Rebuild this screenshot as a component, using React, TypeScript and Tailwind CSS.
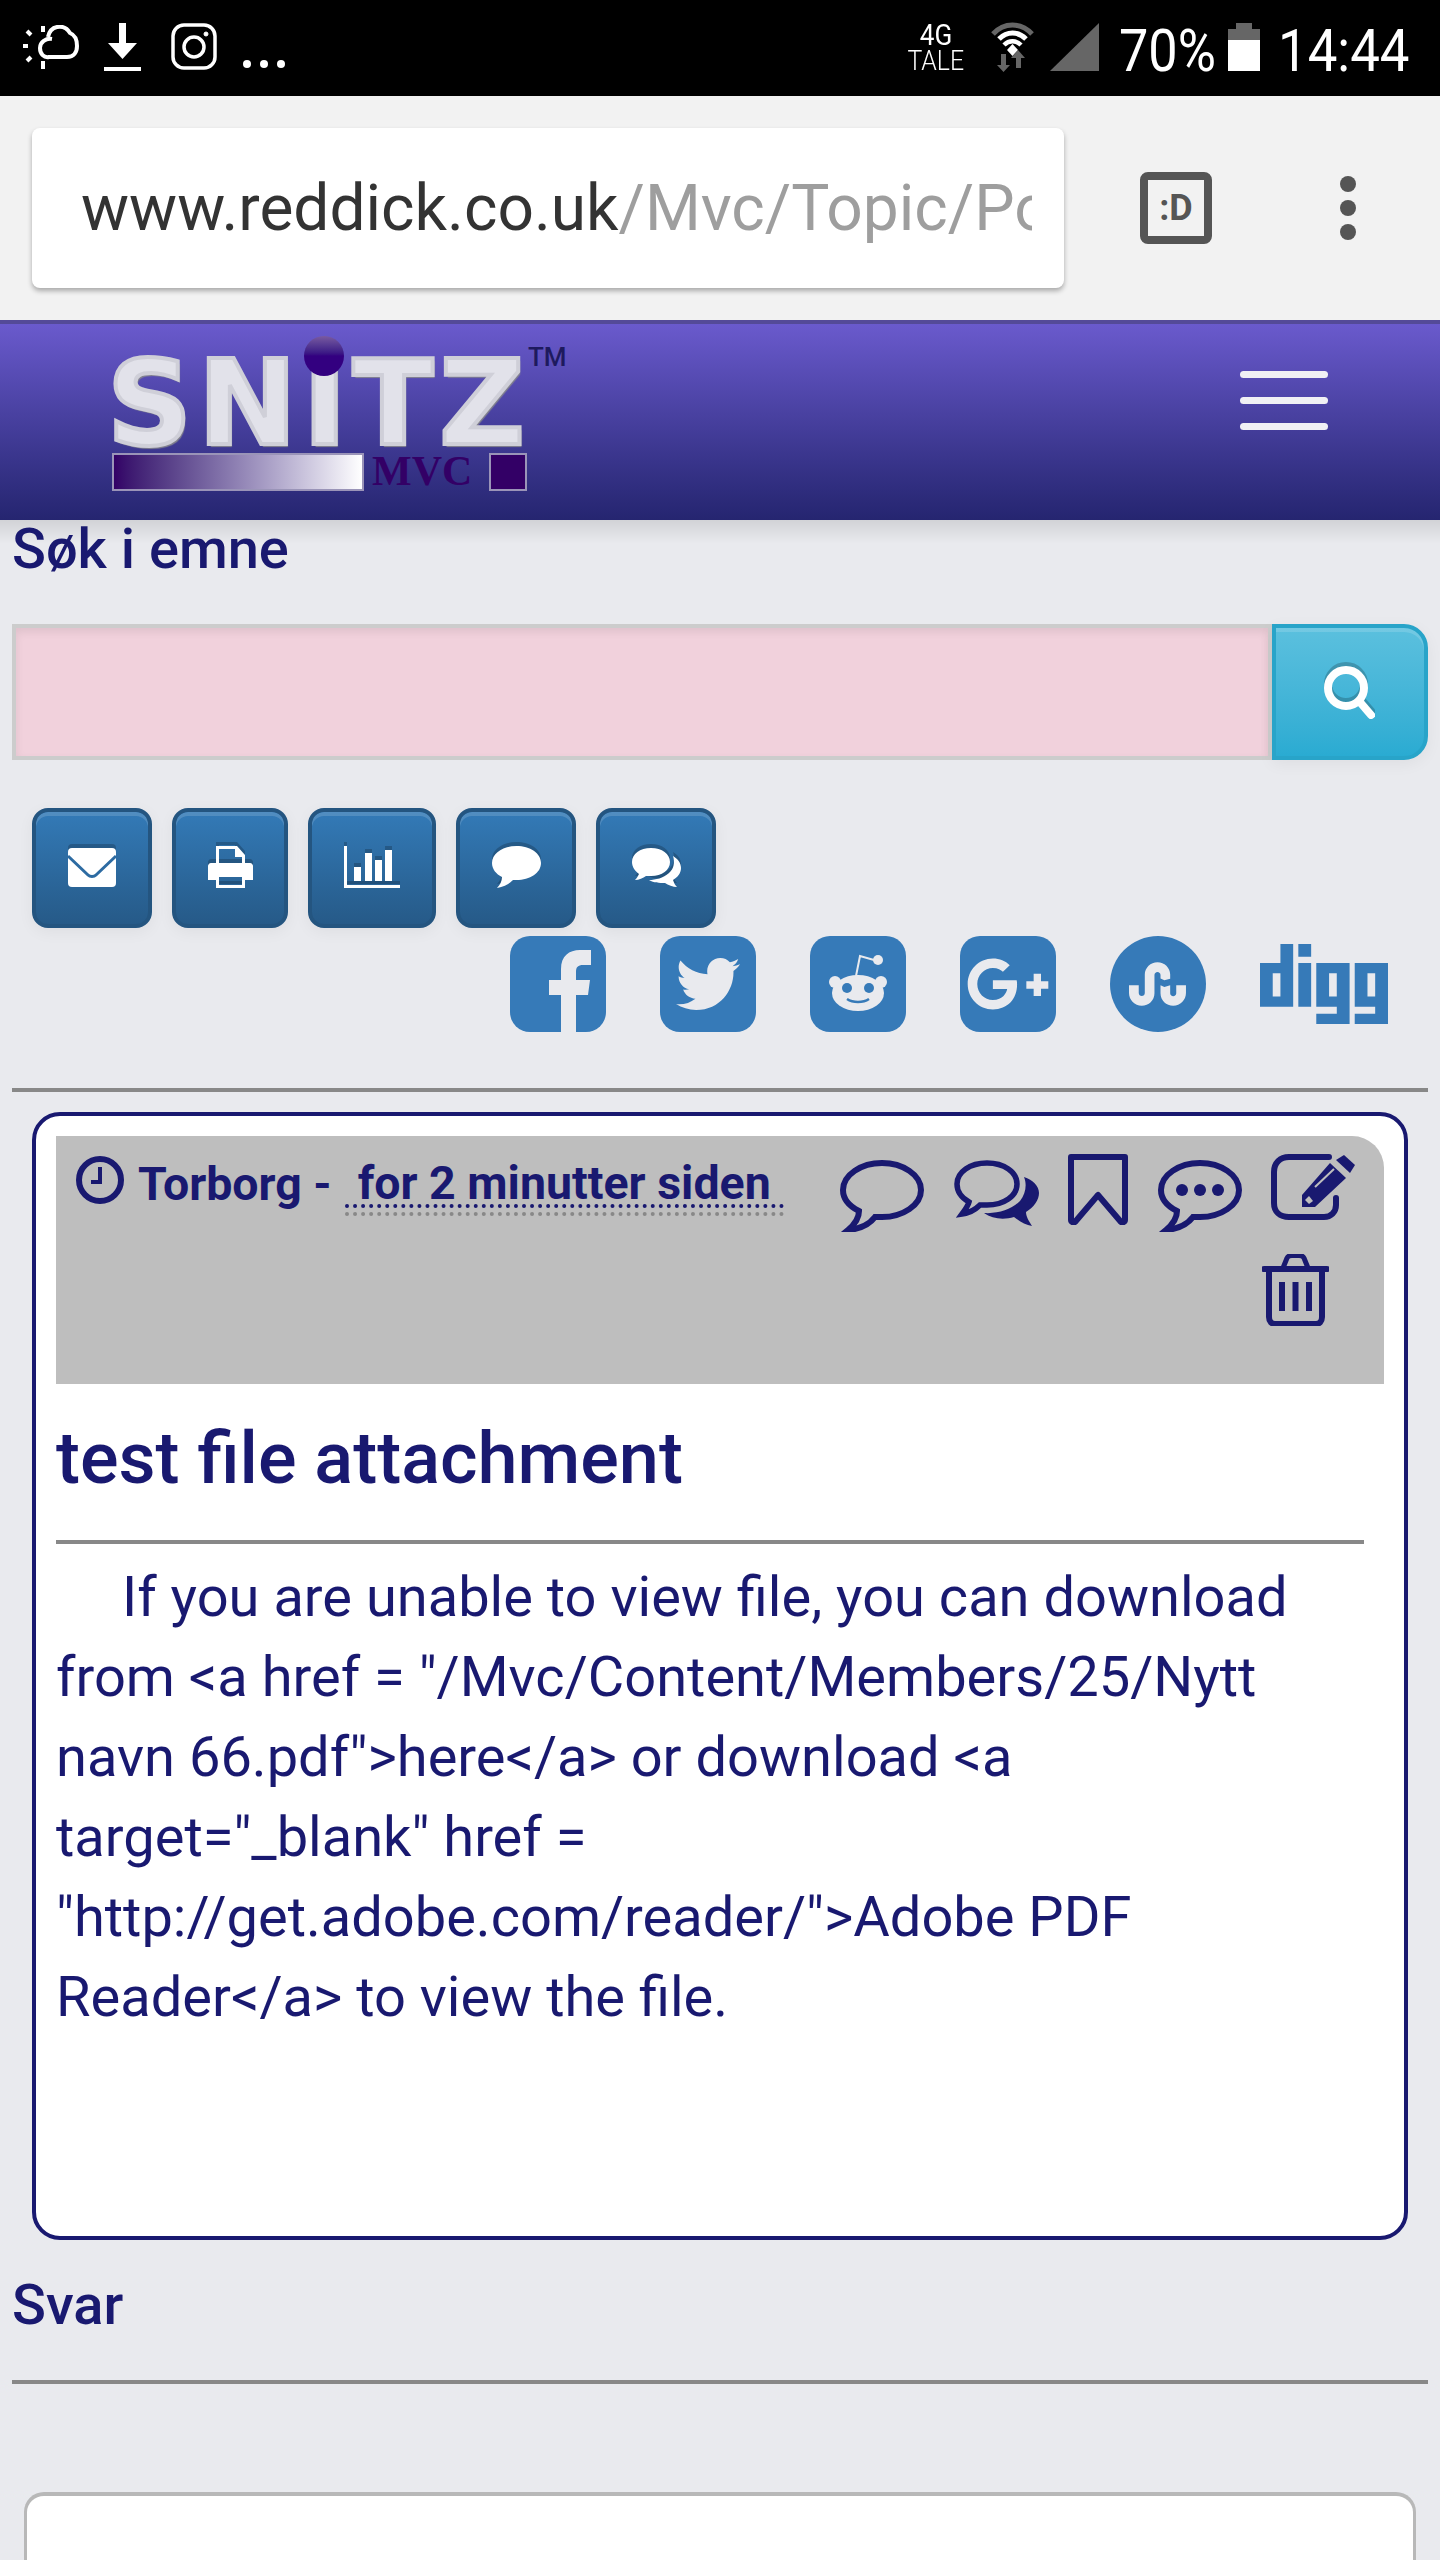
import { FaTwitter, FaGooglePlusG, FaStumbleupon, FaDigg } from 'react-icons/fa';

const shadowIcon = 'drop-shadow-[0_-4px_0_rgba(0,0,0,0.2)]';

const StatusLeft = () => (
  <div className="flex items-start pl-[23px] pt-[23px]">
    <svg width="56" height="46" viewBox="0 0 56 46" fill="none" stroke="white" strokeWidth="4" className="mt-[2px]">
      <path d="M25 32H44C51 32 54 27 54 21C54 15 52 10 47 8C44 3 39 1 34 2C29 3 26 7 25 12" />
      <path d="M29 14C23 13 17 17 17 23C17 29 21 33 26 32" />
      <path d="M20 1V7M4 6L8 10M0 21H5M4 36L8 32M20 36V44" strokeWidth="4" />
    </svg>
    <svg width="37" height="48" viewBox="0 0 37 48" fill="white" className="ml-[25px]">
      <path d="M15 0H22V20H33L18.5 36L4 20H15ZM0 44H37V48H0Z" />
    </svg>
    <svg width="46" height="47" viewBox="0 0 46 47" fill="none" stroke="white" strokeWidth="3.5" className="ml-[30px]">
      <rect x="2" y="2" width="42" height="43" rx="11" />
      <circle cx="23" cy="24" r="10" />
      <circle cx="35" cy="11" r="2" fill="white" strokeWidth="1" />
    </svg>
    <div className="ml-[26px] mt-[37px] flex gap-[9px]">
      <span className="size-[8px] rounded-full bg-white" />
      <span className="size-[8px] rounded-full bg-white" />
      <span className="size-[8px] rounded-full bg-white" />
    </div>
  </div>
);

const StatusRight = () => (
  <div className="flex items-start pr-[32px] pt-[22px] text-white">
    <div className="flex w-[54px] flex-col items-center">
      <span className="origin-top scale-x-[0.9] text-[29px] leading-[27px]">4G</span>
      <span className="origin-top scale-x-[0.92] text-[27px] leading-[25px] font-light">TALE</span>
    </div>
    <svg width="43" height="50" viewBox="0 0 43 50" fill="none" className="ml-[28px]">
      <path d="M2 12C13 0 30 0 41 12" stroke="#666" strokeWidth="5" />
      <path d="M8 17C16 9 27 9 35 17" stroke="white" strokeWidth="5" />
      <path d="M13 23C18 18 25 18 30 23" stroke="white" strokeWidth="4.5" />
      <path d="M16 28L21.5 22L27 28L21.5 34Z" fill="white" />
      <path d="M10 32H15V43H19L12.5 50L6 43H10ZM27 28L34 36H30V46H25V36H20Z" fill="#666" />
    </svg>
    <svg width="49" height="48" viewBox="0 0 49 48" className="ml-[16px] mt-[1px]">
      <path d="M49 0V48H0Z" fill="#666" />
    </svg>
    <span className="ml-[20px] w-[96px] origin-left scale-x-[0.87] text-[60px] leading-[58px] whitespace-nowrap">70%</span>
    <div className="ml-[13px] mt-[1px] flex h-[48px] w-[32px] flex-col items-center">
      <div className="h-[6px] w-[16px] bg-[#666]" />
      <div className="h-[11px] w-full bg-[#666]" />
      <div className="w-full flex-1 bg-white" />
    </div>
    <span className="ml-[18px] w-[130px] origin-left scale-x-[0.88] text-[60px] leading-[58px]">14:44</span>
  </div>
);

const Toolbar = () => (
  <div className="flex h-[224px] items-start bg-[#f2f2f2] pl-[32px] pt-[32px]">
    <div className="h-[160px] w-[1032px] rounded-lg bg-white pl-[49px] pr-[32px] shadow-[0_3px_5px_rgba(0,0,0,0.3)]">
      <div className="overflow-hidden pt-[2px] text-[64px] leading-[158px] whitespace-nowrap text-[#9e9e9e]">
        <span className="text-[#333]">www.reddick.co.uk</span>/Mvc/Topic/Posts/25
      </div>
    </div>
    <div className="ml-[76px] mt-[44px] flex size-[72px] items-center justify-center rounded-lg border-[8px] border-[#555] text-[36px] leading-none font-bold text-[#555]">
      :D
    </div>
    <div className="ml-[128px] mt-[48px] flex flex-col gap-[8px]">
      <span className="size-[16px] rounded-full bg-[#555]" />
      <span className="size-[16px] rounded-full bg-[#555]" />
      <span className="size-[16px] rounded-full bg-[#555]" />
    </div>
  </div>
);

const Logo = () => (
  <div className="relative ml-[112px] mt-[37px] w-[415px]">
    <div className="-ml-[5px] h-[92px] [font-family:'DejaVu_Sans',sans-serif] text-[118px] leading-[84px] font-bold tracking-[6px] whitespace-nowrap text-[#e2e2ea] [-webkit-text-stroke:4px_#cfcfd8] [text-shadow:2px_3px_1px_#85858f]">
      SNITZ
    </div>
    <div className="flex h-[38px] items-stretch">
      <div className="w-[252px] border-2 border-[#9a94b8] bg-gradient-to-r from-[#330066] to-white" />
      <span className="ml-[8px] w-[117px] [font-family:'Liberation_Serif',serif] text-[42px] leading-[36px] font-bold text-[#330066]">MVC</span>
      <div className="w-[38px] border-2 border-[#9a94b8] bg-[#330066]" />
    </div>
    <span className="absolute left-[192px] -top-[25px] size-[40px] rounded-full bg-gradient-to-b from-[#7a5aa0] via-[#330080] to-[#330080]" />
    <span className="absolute left-[416px] -top-[16px] text-[26px] leading-[24px] font-medium text-[#1e1a5e]">TM</span>
  </div>
);

const Header = () => (
  <div className="flex h-[200px] items-start justify-between border-t-4 border-[#544a98] bg-gradient-to-b from-[#6a5acd] to-[#252570]">
    <Logo />
    <div className="mr-[112px] mt-[47px] flex w-[88px] flex-col gap-[19px]">
      <span className="h-[7px] rounded-full bg-[#f0f0f4]" />
      <span className="h-[7px] rounded-full bg-[#f0f0f4]" />
      <span className="h-[7px] rounded-full bg-[#f0f0f4]" />
    </div>
  </div>
);

const SearchIcon = () => (
  <svg width="52" height="53" viewBox="0 0 52 53" fill="none" stroke="white" className={shadowIcon}>
    <ellipse cx="22" cy="22" rx="18" ry="18" strokeWidth="8" />
    <path d="M35 35L47 49" strokeWidth="8" strokeLinecap="round" />
  </svg>
);

const EnvelopeIcon = () => (
  <svg width="48" height="39" viewBox="0 0 48 39" className={shadowIcon}>
    <rect width="48" height="39" rx="4" fill="white" />
    <path d="M0 8L20 27C22 29 26 29 28 27L48 8" fill="none" stroke="#2d6ba2" strokeWidth="3" />
  </svg>
);

const PrintIcon = () => (
  <svg width="45" height="42" viewBox="0 0 45 42" fill="white" fillRule="evenodd" className={shadowIcon}>
    <path d="M8 0H29L37 9V20H8ZM11 3V17H34V11H27V3Z" />
    <path d="M3 17H42C44 17 45 19 45 20V34H37V42H8V34H0V20C0 19 1 17 3 17ZM11 31V39H34V31Z" />
  </svg>
);

const ChartIcon = () => (
  <svg width="56" height="42" viewBox="0 0 56 42" fill="white" className={shadowIcon}>
    <path d="M0 0H3V39H56V42H0Z" />
    <path d="M10 21H17V35H10ZM21 7H28V35H21ZM31 14H38V35H31ZM41 4H48V35H41Z" />
  </svg>
);

const CommentIcon = () => (
  <svg width="49" height="42" viewBox="0 0 49 42" fill="white" className={shadowIcon}>
    <path d="M24.5 0C11 0 0 7 0 17C0 23 4 28 10 31C10 35 8 39 5 42C12 41 17 38 21 34C22 34 23 34 24.5 34C38 34 49 27 49 17C49 7 38 0 24.5 0Z" />
  </svg>
);

const CommentsIcon = () => (
  <svg width="49" height="39" viewBox="0 0 49 39" fill="white" className={shadowIcon}>
    <path d="M19 0C8 0 0 6 0 14C0 19 3 23 7 26C6 28 5 30 3 32C7 32 11 30 14 28C16 28 17 28 19 28C30 28 38 22 38 14C38 6 30 0 19 0Z" />
    <path d="M41 8C43 14 42 21 37 25C31 30 24 32 17 32C22 35 27 35 33 35C36 37 41 39 45 39C43 37 42 35 41 32C46 29 49 25 49 20C49 15 46 11 41 8Z" />
  </svg>
);

const BlueButton = ({ width, children }: { width: string; children: React.ReactNode }) => (
  <div className={`flex h-[120px] items-center justify-center rounded-2xl border-4 border-[#245580] bg-gradient-to-b from-[#337ab7] to-[#265a88] pb-[2px] shadow-[inset_0_4px_0_rgba(255,255,255,0.15),0_4px_16px_rgba(0,0,0,0.05)] ${width}`}>
    {children}
  </div>
);

const Social = ({ round, children }: { round?: boolean; children: React.ReactNode }) => (
  <div className={`flex size-[96px] items-center justify-center overflow-hidden bg-[#367ab8] text-[#e9eaee] ${round ? 'rounded-full' : 'rounded-[20px]'}`}>
    {children}
  </div>
);

const SocialRow = () => (
  <div className="mr-[40px] mt-[8px] flex items-start justify-end gap-[54px]">
    <Social>
      <svg width="96" height="96" viewBox="0 0 96 96" fill="currentColor">
        <path d="M51 96V59H39V44H51V33C51 20 59 14 70 14H81V29H73C68 29 66 31 66 36V44H80L78 59H66V96Z" />
      </svg>
    </Social>
    <Social>
      <FaTwitter size={64} />
    </Social>
    <Social>
      <svg width="96" height="96" viewBox="0 0 96 96" fill="currentColor">
        <ellipse cx="48" cy="57" rx="26" ry="18" />
        <circle cx="25" cy="46" r="6" />
        <circle cx="71" cy="46" r="6" />
        <circle cx="68" cy="24" r="5" />
        <path d="M46 40L50 20L64 24" fill="none" stroke="currentColor" strokeWidth="2" />
        <circle cx="37" cy="52" r="5" fill="#367ab8" />
        <circle cx="59" cy="52" r="5" fill="#367ab8" />
        <path d="M37 63C43 67 53 67 59 63" fill="none" stroke="#367ab8" strokeWidth="2.5" />
      </svg>
    </Social>
    <Social>
      <FaGooglePlusG className="h-[68px] w-[84px]" preserveAspectRatio="none" />
    </Social>
    <Social round>
      <FaStumbleupon size={58} />
    </Social>
    <div className="flex h-[96px] w-[128px] items-center justify-center text-[#367ab8]">
      <FaDigg size={128} />
    </div>
  </div>
);

const PostActions = () => (
  <div className="flex flex-col items-end pr-[28px] pt-[18px] text-[#191970]">
    <div className="flex h-[78px] items-start gap-[29.5px]">
      <svg width="84" height="72" viewBox="0 0 84 72" fill="none" stroke="currentColor" strokeWidth="6" className="mt-[6px]">
        <path d="M42 3C21 3 3 15 3 30C3 39 9 46 19 51C19 58 14 65 8 70C20 69 29 65 35 57C37 57 40 57 42 57C63 57 81 45 81 30C81 15 63 3 42 3Z" />
      </svg>
      <svg width="85" height="66" viewBox="0 0 85 66" fill="none" className="mt-[6px]">
        <path d="M33 3C16 3 3 12 3 24C3 32 8 38 15 42C14 46 11 50 8 54C15 53 21 50 26 45C28 45 31 45 33 45C50 45 63 36 63 24C63 12 50 3 33 3Z" stroke="currentColor" strokeWidth="5.5" />
        <path d="M70 17C73 24 72 33 66 41C58 49 45 54 30 53C38 59 50 60 60 57C66 62 72 65 78 66C74 60 72 56 72 52C80 47 85 40 85 33C85 26 79 20 70 17Z" fill="currentColor" />
      </svg>
      <svg width="60" height="71" viewBox="0 0 60 71" fill="none" stroke="currentColor" strokeWidth="6" strokeLinejoin="round">
        <path d="M3 3H57V66C57 68 54 69 53 68L30 41L7 68C6 69 3 68 3 66Z" />
      </svg>
      <svg width="84" height="72" viewBox="0 0 84 72" fill="none" stroke="currentColor" strokeWidth="6" className="mt-[6px]">
        <path d="M42 3C21 3 3 15 3 30C3 39 9 46 19 51C19 58 14 65 8 70C20 69 29 65 35 57C37 57 40 57 42 57C63 57 81 45 81 30C81 15 63 3 42 3Z" />
        <circle cx="24" cy="30" r="6" fill="currentColor" stroke="none" />
        <circle cx="42" cy="30" r="6" fill="currentColor" stroke="none" />
        <circle cx="60" cy="30" r="6" fill="currentColor" stroke="none" />
      </svg>
      <svg width="85" height="66" viewBox="0 0 85 66" fill="none">
        <path d="M58 3H18C9 3 3 9 3 18V49C3 58 9 63 18 63H53C60 63 65 58 65 51V44" stroke="currentColor" strokeWidth="6" strokeLinecap="round" />
        <path d="M73 1L84 11L79 19L65 6Z" fill="currentColor" />
        <path d="M59 9L75 24L44 53H31V41Z" fill="currentColor" />
        <path d="M44 33L63 15" stroke="#bebebe" strokeWidth="2" />
        <path d="M34 46L38 42L42 47L38 50Z" fill="#bebebe" />
      </svg>
    </div>
    <svg width="67" height="72" viewBox="0 0 67 72" fill="none" stroke="currentColor" className="mr-[27px] mt-[22px]">
      <path d="M21 14L25 4C26 2 28 1.5 30 1.5H37C39 1.5 41 2 42 4L46 14" strokeWidth="5" />
      <path d="M2 15H65" strokeWidth="6" strokeLinecap="round" />
      <path d="M7 15V63C7 68 10 70 13 70H54C57 70 60 68 60 63V15" strokeWidth="6" />
      <path d="M20 28V57M33.5 28V57M47 28V57" strokeWidth="6" />
    </svg>
  </div>
);

const PostHeader = () => (
  <div className="flex h-[248px] items-start justify-between rounded-tr-[32px] bg-[#bebebe] pl-[20px] text-[#191970]">
    <div className="flex items-start pt-[20px] whitespace-nowrap">
      <svg width="48" height="48" viewBox="0 0 48 48" fill="none" stroke="currentColor">
        <circle cx="24" cy="24" r="21" strokeWidth="6" />
        <path d="M24 11V26H15" strokeWidth="4" />
      </svg>
      <span className="ml-[14px] mt-[6px] text-[46.5px] leading-[44px] font-bold">Torborg -</span>
      <span className="ml-[13px] mt-[6px] inline-block border-b-4 border-dotted border-[#888] pb-[4px]">
        <span className="block border-b-4 border-dotted border-[#191970] px-[13px] text-[46.5px] leading-[42px] font-bold">for 2 minutter siden</span>
      </span>
    </div>
    <PostActions />
  </div>
);

const Post = () => (
  <div className="mx-[20px] mt-[20px] h-[1128px] rounded-[28px] border-4 border-[#191970] bg-white px-[20px] pt-[20px]">
    <PostHeader />
    <h3 className="mt-[27px] text-[72px] leading-[96px] font-medium">test file attachment</h3>
    <div className="mr-[20px] mt-[33px] h-[4px] bg-[#888]" />
    <p className="mr-[20px] mt-[13px] text-[56px] leading-[80px] indent-[66px]">
      If you are unable to view file, you can download from &lt;a href = "/Mvc/Content/Members/25/Nytt navn 66.pdf"&gt;here&lt;/a&gt; or download &lt;a target="_blank" href = "http://get.adobe.com/reader/"&gt;Adobe PDF Reader&lt;/a&gt; to view the file.
    </p>
  </div>
);

export default function App() {
  return (
    <div className="h-[2560px] w-[1440px] overflow-hidden bg-[#e9eaee] [font-family:Roboto,sans-serif] text-[#191970]">
      <div className="flex h-[96px] items-start justify-between bg-black">
        <StatusLeft />
        <StatusRight />
      </div>
      <Toolbar />
      <Header />
      <main className="relative px-[12px]">
        <div className="absolute inset-x-0 top-0 h-[24px] bg-gradient-to-b from-black/10 to-transparent" />
        <div className="relative pt-[5px] text-[56px] leading-[48px] font-medium">Søk i emne</div>
        <div className="mt-[51px] flex h-[136px]">
          <div className="flex-1 border-4 border-[#ccc] bg-[#f1d1dc] shadow-[inset_0_4px_8px_rgba(0,0,0,0.08)]" />
          <div className="flex w-[156px] items-center justify-center rounded-r-[24px] border-4 border-[#28a4c9] bg-gradient-to-b from-[#5bc0de] to-[#2aabd2] shadow-[inset_0_4px_0_rgba(255,255,255,0.15),0_4px_16px_rgba(0,0,0,0.05)]">
            <SearchIcon />
          </div>
        </div>
        <div className="ml-[20px] mt-[48px] flex gap-[20px]">
          <BlueButton width="w-[120px]"><EnvelopeIcon /></BlueButton>
          <BlueButton width="w-[116px]"><PrintIcon /></BlueButton>
          <BlueButton width="w-[128px]"><ChartIcon /></BlueButton>
          <BlueButton width="w-[120px]"><CommentIcon /></BlueButton>
          <BlueButton width="w-[120px]"><CommentsIcon /></BlueButton>
        </div>
        <SocialRow />
        <div className="mt-[56px] h-[4px] bg-[#888]" />
        <Post />
        <div className="mt-[41px] text-[56px] leading-[48px] font-medium">Svar</div>
        <div className="mt-[51px] h-[4px] bg-[#888]" />
        <div className="mx-[12px] mt-[108px] h-[200px] rounded-t-[20px] border-x-[3px] border-t-4 border-[#b8b8b8] bg-white" />
      </main>
    </div>
  );
}
